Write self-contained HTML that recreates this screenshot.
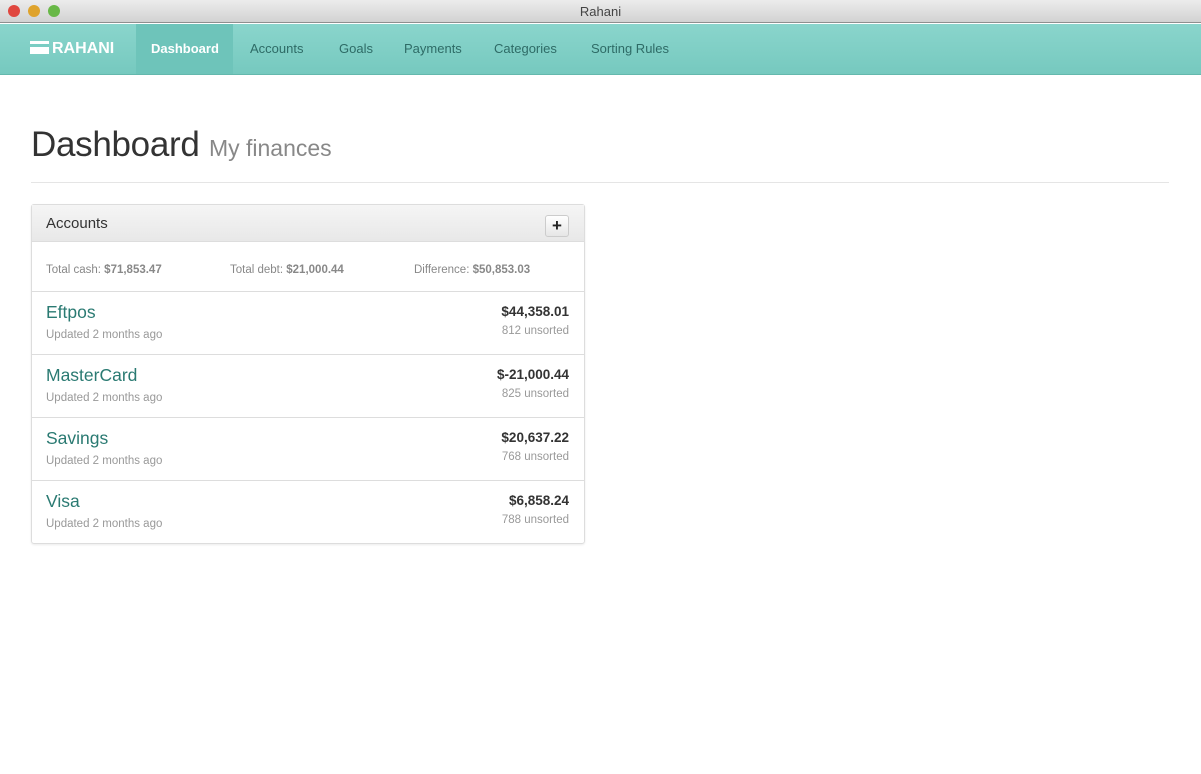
<!DOCTYPE html>
<html><head><style>
*{margin:0;padding:0;box-sizing:border-box}
body{width:1201px;height:774px;background:#fff;font-family:"Liberation Sans",sans-serif;overflow:hidden;position:relative}
.title{height:23px;background:linear-gradient(#ececec,#d2d2d2);border-bottom:1px solid #8f8f8f;text-align:center;font-size:13px;line-height:23px;color:#444;position:relative}
.dot{position:absolute;top:5px;width:12px;height:12px;border-radius:50%}
.nav{position:absolute;top:24px;left:0;width:1201px;height:51px;background:linear-gradient(#8ad5cc,#76c9bf);border-bottom:1px solid #64b8ad}
.nav a{position:absolute;top:0;height:50px;line-height:50px;font-size:13px;color:#2e6b66}
.brand{left:30px;color:#fff!important;font-size:16px!important;font-weight:bold}
.act{background:#6ec4ba;color:#fff!important;padding:0 14px 0 15px;left:136px;font-weight:bold}
h1{position:absolute;top:125px;left:31px;font-size:35px;font-weight:normal;color:#333;letter-spacing:-0.3px}
h1 small{font-size:23px;color:#888;letter-spacing:0}
.hr{position:absolute;top:182px;left:31px;width:1138px;border-top:1px solid #e5e5e5}
.panel{position:absolute;top:204px;left:31px;width:554px;height:340px;border:1px solid #ddd;border-radius:3px;box-shadow:0 1px 2px rgba(0,0,0,.08)}
.ph{height:37px;background:linear-gradient(#f5f5f5,#e8e8e8);border-bottom:1px solid #ddd;font-size:15px;color:#333;padding:10px 14px}
.plus{position:absolute;right:15px;top:10px;width:24px;height:22px;border:1px solid #ccc;border-radius:3px;background:linear-gradient(#fff,#e6e6e6);text-align:center;font-weight:bold;font-size:17px;line-height:20px;color:#222}
.tot{height:50px;border-bottom:1px solid #ddd;font-size:11.5px;color:#888;position:relative}
.tot span{position:absolute;top:22px}
.tot b{color:#888}
.row{height:63px;border-bottom:1px solid #ddd;position:relative}
.row:last-child{border:none}
.n{position:absolute;left:14px;top:10px;font-size:17.5px;color:#2a7a72}
.u{position:absolute;left:14px;top:37px;font-size:11.5px;color:#999}
.v{position:absolute;right:15px;top:12px;font-size:13.5px;font-weight:bold;color:#333}
.s{position:absolute;right:15px;top:33px;font-size:11.5px;color:#999}
</style></head><body>
<div class="title">Rahani
<div class="dot" style="left:8px;background:#e0473f"></div>
<div class="dot" style="left:28px;background:#dfa32c"></div>
<div class="dot" style="left:48px;background:#68b847"></div></div>
<div class="nav">
<a class="brand"><span style="display:inline-block;width:19px;height:13px;background:#fff;vertical-align:-1px;margin-right:3px;border-top:3px solid #fff;box-shadow:inset 0 3px #7acdc3"></span>RAHANI</a>
<a class="act">Dashboard</a>
<a style="left:250px">Accounts</a><a style="left:339px">Goals</a><a style="left:404px">Payments</a><a style="left:494px">Categories</a><a style="left:591px">Sorting Rules</a>
</div>
<h1>Dashboard <small>My finances</small></h1>
<div class="hr"></div>
<div class="panel">
<div class="ph">Accounts<div class="plus">+</div></div>
<div class="tot"><span style="left:14px">Total cash: <b>$71,853.47</b></span><span style="left:198px">Total debt: <b>$21,000.44</b></span><span style="left:382px">Difference: <b>$50,853.03</b></span></div>
<div class="row"><div class="n">Eftpos</div><div class="u">Updated 2 months ago</div><div class="v">$44,358.01</div><div class="s">812 unsorted</div></div>
<div class="row"><div class="n">MasterCard</div><div class="u">Updated 2 months ago</div><div class="v">$-21,000.44</div><div class="s">825 unsorted</div></div>
<div class="row"><div class="n">Savings</div><div class="u">Updated 2 months ago</div><div class="v">$20,637.22</div><div class="s">768 unsorted</div></div>
<div class="row"><div class="n">Visa</div><div class="u">Updated 2 months ago</div><div class="v">$6,858.24</div><div class="s">788 unsorted</div></div>
</div>
</body></html>
